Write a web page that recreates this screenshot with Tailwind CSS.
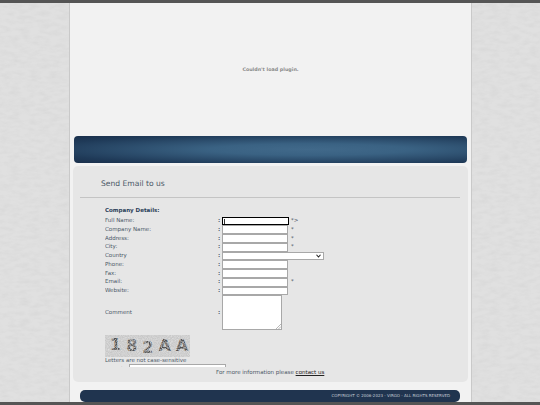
<!DOCTYPE html>
<html lang="en">
  <head>
    <meta charset="UTF-8" />
    <title>Send Email to us</title>
    <script src="https://cdn.jsdelivr.net/npm/@tailwindcss/browser@4"></script>
  </head>
  <body class="font-['DejaVu_Sans',sans-serif]">
    <div class="relative flex h-[405px] w-[540px] flex-col overflow-hidden bg-[#e0e0e0]">
      <svg class="absolute inset-0 h-full w-full" aria-hidden="true">
        <filter id="paper">
          <feTurbulence type="fractalNoise" baseFrequency="0.1 0.25" numOctaves="5" seed="4" />
          <feColorMatrix values="0 0 0 0 0.55  0 0 0 0 0.55  0 0 0 0 0.55  0.45 0 0 0 -0.16" />
        </filter>
        <rect width="100%" height="100%" filter="url(#paper)" />
      </svg>

      <div class="relative h-[3px] shrink-0 bg-[#555555]"></div>

      <div class="relative ml-[69px] flex h-[399px] w-[403px] shrink-0 flex-col border-x border-[#c9c9c9] bg-[#f2f2f2]">
        <div class="flex h-[133px] shrink-0 items-center justify-center text-[4.8px] font-bold text-[#8a8a8a]">
          Couldn't load plugin.
        </div>

        <div class="mx-[4px] h-[27px] w-[393px] shrink-0 rounded-[4px] bg-[radial-gradient(ellipse_at_60%_50%,#41698a_0%,#3a6283_30%,#1f3a58_80%,#1a2f4b_100%)]"></div>

        <div class="mx-[3px] mt-[3px] flex h-[216px] w-[395px] shrink-0 flex-col rounded-[5px] bg-[#e6e6e6]">
          <h1 class="ml-[28px] mt-[12px] text-[7.6px] leading-[12px] text-[#4b5866]">Send Email to us</h1>
          <div class="mx-[7px] mt-[7px] h-px w-[380px] bg-[#c4c4c4]"></div>

          <div class="ml-[32px] mt-[8px] h-[161px] overflow-hidden text-[5.5px] text-[#4b5866]">
            <div class="mb-[1.5px] h-[9px] font-bold leading-[9px] text-[#2b4058]">Company Details:</div>

            <div class="grid grid-cols-[113px_4px_1fr] grid-rows-[repeat(9,8.75px)_35px] items-center leading-none">
              <span>Full Name:</span><span class="font-bold">:</span>
              <div class="flex items-center">
                <div class="relative h-[8.75px] w-[67px] border border-black bg-white">
                  <span class="absolute left-[1px] top-[1px] h-[5px] w-px bg-[#333333]"></span>
                </div>
                <span class="ml-[2px]">*&gt;</span>
              </div>

              <span>Company Name:</span><span class="font-bold">:</span>
              <div class="flex items-center">
                <input class="h-[8.75px] w-[66px] border border-[#a8a8a8] bg-white" />
                <span class="ml-[3px]">*</span>
              </div>

              <span>Address:</span><span class="font-bold">:</span>
              <div class="flex items-center">
                <input class="h-[8.75px] w-[66px] border border-[#a8a8a8] bg-white" />
                <span class="ml-[3px]">*</span>
              </div>

              <span>City:</span><span class="font-bold">:</span>
              <div class="flex items-center">
                <input class="h-[8.75px] w-[66px] border border-[#a8a8a8] bg-white" />
                <span class="ml-[3px]">*</span>
              </div>

              <span>Country</span><span class="font-bold">:</span>
              <div class="relative h-[7.5px] w-[102px] border border-[#a8a8a8] bg-white">
                <svg class="absolute right-[2px] top-[1px] h-[4px] w-[5px]" viewBox="0 0 10 8"><path d="M1 1.5 5 6 9 1.5" fill="none" stroke="#222" stroke-width="2.2" /></svg>
              </div>

              <span>Phone:</span><span class="font-bold">:</span>
              <input class="block h-[8.75px] w-[66px] border border-[#a8a8a8] bg-white" />

              <span>Fax:</span><span class="font-bold">:</span>
              <input class="block h-[8.75px] w-[66px] border border-[#a8a8a8] bg-white" />

              <span>Email:</span><span class="font-bold">:</span>
              <div class="flex items-center">
                <input class="h-[8.75px] w-[66px] border border-[#a8a8a8] bg-white" />
                <span class="ml-[3px]">*</span>
              </div>

              <span>Website:</span><span class="font-bold">:</span>
              <input class="block h-[8.75px] w-[66px] border border-[#a8a8a8] bg-white" />

              <span>Comment</span><span class="font-bold">:</span>
              <div class="relative h-[35px] w-[60px] border border-[#a8a8a8] bg-white">
                <svg class="absolute bottom-0 right-0 h-[5px] w-[5px]" viewBox="0 0 5 5"><path d="M0 5 5 0M2.5 5 5 2.5" stroke="#888" stroke-width=".6" /></svg>
              </div>
            </div>

            <div class="relative mt-[5px] flex h-[22px] w-[85px] items-center gap-[5px] overflow-hidden bg-[#c8c8c8] pl-[5px] text-[16px] font-bold leading-none text-[#505050]">
              <span class="-mt-[3px]">1</span>
              <span>8</span>
              <span class="mt-[4px]">2</span>
              <span>A</span>
              <span>A</span>
              <svg class="absolute inset-0 h-full w-full" aria-hidden="true">
                <filter id="speckle">
                  <feTurbulence type="fractalNoise" baseFrequency="0.9" numOctaves="2" seed="7" />
                  <feColorMatrix values="0 0 0 0 0.75  0 0 0 0 0.75  0 0 0 0 0.75  1.8 0 0 0 -0.6" />
                </filter>
                <rect width="100%" height="100%" filter="url(#speckle)" />
              </svg>
            </div>
            <div class="h-[7px] leading-[7px]">Letters are not case-sensitive</div>
            <div class="flex h-[8px] items-start leading-[10px]">
              <span>Captcha</span>
              <input class="ml-px h-[9px] w-[97px] border border-[#a8a8a8] bg-white" />
            </div>
          </div>

          <div class="ml-[143px] mt-px text-[5.5px] leading-[9px] text-[#4b5866]">
            For more information please <a class="text-[#222222] underline">contact us</a>
          </div>
        </div>

        <div class="mx-[10px] mt-[8px] flex h-[12px] w-[380px] items-center justify-end rounded-[5px] bg-[#20344f] pr-[10px] text-[4px] text-[#c6ced8]">
          COPYRIGHT © 2006-2023 - VIRGO - ALL RIGHTS RESERVED
        </div>
      </div>

      <div class="relative h-[3px] shrink-0 bg-[#555555]"></div>
    </div>
  </body>
</html>
